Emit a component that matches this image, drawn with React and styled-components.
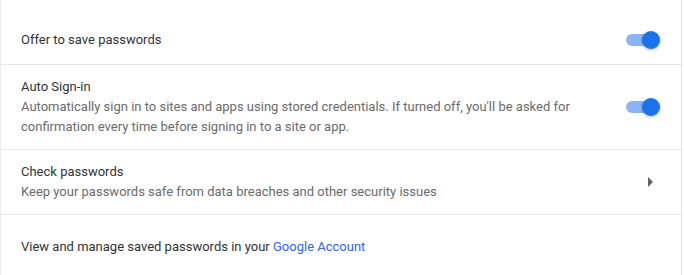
import React from 'react';
import styled, { createGlobalStyle } from 'styled-components';

const GlobalStyle = createGlobalStyle`
  body {
    margin: 0;
    background: #ffffff;
    font-family: Roboto, "Liberation Sans", Arial, sans-serif;
    -webkit-font-smoothing: antialiased;
  }
`;

const Page = styled.div`
  width: 684px;
  height: 275px;
  overflow: hidden;
  background: #ffffff;
`;

const Card = styled.div`
  width: 680px;
  padding-top: 16px;
  border-left: 1px solid #ececec;
  border-right: 1px solid #e4e4e4;
  background: #ffffff;
`;

const Row = styled.div`
  display: flex;
  align-items: center;
  min-height: ${p => p.$min || 48}px;
  padding: 0 20px 0 20px;
  box-sizing: border-box;
  border-top: ${p => (p.$first ? 'none' : '1px solid #e8e8e8')};
  cursor: ${p => (p.$link ? 'pointer' : 'default')};
`;

const Text = styled.div`
  flex: 1;
  padding: ${p => (p.$multi ? '12px 0' : '0')};
  font-size: 13px;
  line-height: 20px;
  color: #333333;
`;

const Secondary = styled.div`
  color: #6b6b6b;
  max-width: 560px;
`;

const Link = styled.a`
  color: #3367d6;
  text-decoration: none;
`;

const ToggleBar = styled.span`
  position: relative;
  display: inline-block;
  width: 30px;
  height: 12px;
  margin: 0 5px 0 24px;
  border-radius: 6px;
  background: #8ab4f8;
  flex-shrink: 0;
`;

const ToggleKnob = styled.span`
  position: absolute;
  top: -3px;
  left: 16px;
  width: 18px;
  height: 18px;
  border-radius: 50%;
  background: #1a73e8;
  box-shadow: 0 1px 3px rgba(0, 0, 0, 0.3);
`;

const Arrow = styled.svg`
  width: 20px;
  height: 20px;
  margin-right: 1px;
  flex-shrink: 0;
`;

function Toggle() {
  return (
    <ToggleBar>
      <ToggleKnob />
    </ToggleBar>
  );
}

export default function App() {
  return (
    <Page>
      <GlobalStyle />
      <Card>
        <Row $first>
          <Text>Offer to save passwords</Text>
          <Toggle />
        </Row>
        <Row>
          <Text $multi>
            Auto Sign-in
            <Secondary>
              Automatically sign in to sites and apps using stored credentials. If turned off, you'll be asked for
              confirmation every time before signing in to a site or app.
            </Secondary>
          </Text>
          <Toggle />
        </Row>
        <Row $link>
          <Text $multi>
            Check passwords
            <Secondary>Keep your passwords safe from data breaches and other security issues</Secondary>
          </Text>
          <Arrow viewBox="0 0 20 20">
            <path d="M8 5 L13 10 L8 15 Z" fill="#5f6368" />
          </Arrow>
        </Row>
        <Row $min={64}>
          <Text>
            View and manage saved passwords in your <Link href="#">Google Account</Link>
          </Text>
        </Row>
      </Card>
    </Page>
  );
}
